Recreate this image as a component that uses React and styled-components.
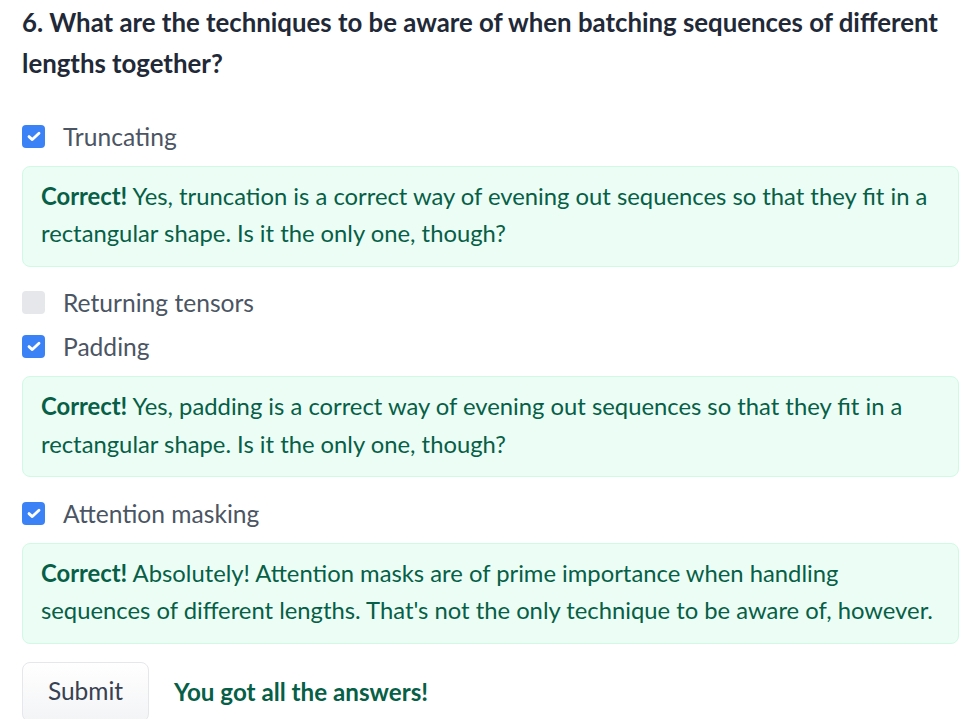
import React from "react";
import styled, { createGlobalStyle } from "styled-components";

const Global = createGlobalStyle`
  html, body { margin: 0; padding: 0; background: #ffffff; }
  body { font-family: "Lato", "Liberation Sans", sans-serif; }
`;

const Page = styled.div`
  padding: 2px 5px 0 22px;
  display: flex;
  flex-direction: column;
`;

const Question = styled.h3`
  margin: 0 0 30px;
  font-size: 25.8px;
  line-height: 41px;
  font-weight: 700;
  color: #1f2937;
`;

const Option = styled.label`
  display: flex;
  align-items: center;
  gap: 18px;
  height: 44px;
  font-size: 24.6px;
  color: #4b5563;
  margin-bottom: ${(p) => p.$mb || 0}px;
`;

const Box = styled.span`
  width: 23px;
  height: 23px;
  border-radius: 4px;
  flex: none;
  display: flex;
  align-items: center;
  justify-content: center;
  background: ${(p) => (p.$checked ? "#3b82f6" : "#e5e7eb")};
`;

const Feedback = styled.p`
  margin: 0 0 ${(p) => p.$mb || 0}px;
  background: #ecfdf5;
  border: 1px solid #d1fae5;
  border-radius: 8px;
  padding: 11px 18px 13px;
  font-size: 23.8px;
  line-height: 37.5px;
  color: #065f46;
`;

const Strong = styled.strong`
  font-weight: 700;
`;

const Footer = styled.div`
  display: flex;
  align-items: center;
  gap: 25px;
`;

const Button = styled.button`
  font-family: inherit;
  font-size: 24.5px;
  color: #374151;
  background: linear-gradient(#ffffff, #f3f4f6);
  border: 1px solid #e5e7eb;
  border-radius: 8px;
  height: 60px;
  width: 127px;
  padding: 0 0 2px;
`;

const Result = styled.span`
  font-size: 24.2px;
  font-weight: 700;
  color: #065f46;
`;

const Check = () => (
  <svg width="14" height="11" viewBox="0 0 14 11" fill="none">
    <path d="M2 5.6 L5.3 8.6 L12 2.2" stroke="#fff" strokeWidth="2.8" strokeLinecap="round" strokeLinejoin="round" />
  </svg>
);

const items = [
  {
    label: "Truncating",
    checked: true,
    feedback:
      "Yes, truncation is a correct way of evening out sequences so that they fit in a rectangular shape. Is it the only one, though?",
  },
  { label: "Returning tensors", checked: false },
  {
    label: "Padding",
    checked: true,
    feedback:
      "Yes, padding is a correct way of evening out sequences so that they fit in a rectangular shape. Is it the only one, though?",
  },
  {
    label: "Attention masking",
    checked: true,
    feedback:
      "Absolutely! Attention masks are of prime importance when handling sequences of different lengths. That's not the only technique to be aware of, however.",
  },
];

export default function App() {
  return (
    <>
      <Global />
      <Page>
        <Question>
          6. What are the techniques to be aware of when batching sequences of different lengths together?
        </Question>
        {items.map((it, i) => (
          <React.Fragment key={it.label}>
            <Option $mb={it.feedback ? 7.5 : 0}>
              <Box $checked={it.checked}>{it.checked && <Check />}</Box>
              {it.label}
            </Option>
            {it.feedback && (
              <Feedback $mb={i === items.length - 1 ? 18 : 14}>
                <Strong>Correct!</Strong> {it.feedback}
              </Feedback>
            )}
          </React.Fragment>
        ))}
        <Footer>
          <Button>Submit</Button>
          <Result>You got all the answers!</Result>
        </Footer>
      </Page>
    </>
  );
}
